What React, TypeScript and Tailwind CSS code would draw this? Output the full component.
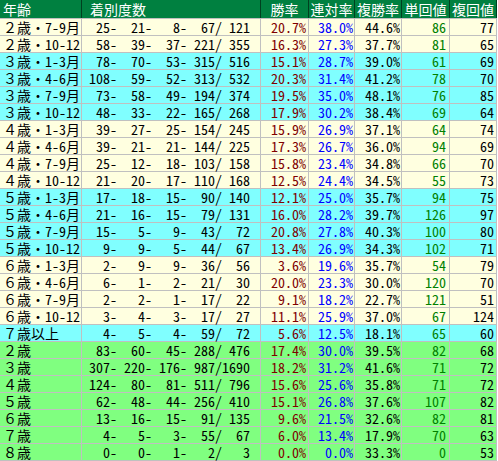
import React from 'react';

type Row = {
  label: string;
  counts: [number, number, number, number, number];
  win: string;
  quinella: string;
  place: string;
  winRet: number;
  placeRet: number;
  tone: 'cream' | 'cyan' | 'green';
};

const rows: Row[] = [
  { label: '２歳・7-9月', counts: [25, 21, 8, 67, 121], win: '20.7', quinella: '38.0', place: '44.6', winRet: 86, placeRet: 77, tone: 'cream' },
  { label: '２歳・10-12', counts: [58, 39, 37, 221, 355], win: '16.3', quinella: '27.3', place: '37.7', winRet: 81, placeRet: 65, tone: 'cream' },
  { label: '３歳・1-3月', counts: [78, 70, 53, 315, 516], win: '15.1', quinella: '28.7', place: '39.0', winRet: 61, placeRet: 69, tone: 'cyan' },
  { label: '３歳・4-6月', counts: [108, 59, 52, 313, 532], win: '20.3', quinella: '31.4', place: '41.2', winRet: 78, placeRet: 70, tone: 'cyan' },
  { label: '３歳・7-9月', counts: [73, 58, 49, 194, 374], win: '19.5', quinella: '35.0', place: '48.1', winRet: 76, placeRet: 85, tone: 'cyan' },
  { label: '３歳・10-12', counts: [48, 33, 22, 165, 268], win: '17.9', quinella: '30.2', place: '38.4', winRet: 69, placeRet: 64, tone: 'cyan' },
  { label: '４歳・1-3月', counts: [39, 27, 25, 154, 245], win: '15.9', quinella: '26.9', place: '37.1', winRet: 64, placeRet: 74, tone: 'cream' },
  { label: '４歳・4-6月', counts: [39, 21, 21, 144, 225], win: '17.3', quinella: '26.7', place: '36.0', winRet: 94, placeRet: 69, tone: 'cream' },
  { label: '４歳・7-9月', counts: [25, 12, 18, 103, 158], win: '15.8', quinella: '23.4', place: '34.8', winRet: 66, placeRet: 70, tone: 'cream' },
  { label: '４歳・10-12', counts: [21, 20, 17, 110, 168], win: '12.5', quinella: '24.4', place: '34.5', winRet: 55, placeRet: 73, tone: 'cream' },
  { label: '５歳・1-3月', counts: [17, 18, 15, 90, 140], win: '12.1', quinella: '25.0', place: '35.7', winRet: 94, placeRet: 75, tone: 'cyan' },
  { label: '５歳・4-6月', counts: [21, 16, 15, 79, 131], win: '16.0', quinella: '28.2', place: '39.7', winRet: 126, placeRet: 97, tone: 'cyan' },
  { label: '５歳・7-9月', counts: [15, 5, 9, 43, 72], win: '20.8', quinella: '27.8', place: '40.3', winRet: 100, placeRet: 80, tone: 'cyan' },
  { label: '５歳・10-12', counts: [9, 9, 5, 44, 67], win: '13.4', quinella: '26.9', place: '34.3', winRet: 102, placeRet: 71, tone: 'cyan' },
  { label: '６歳・1-3月', counts: [2, 9, 9, 36, 56], win: '3.6', quinella: '19.6', place: '35.7', winRet: 54, placeRet: 79, tone: 'cream' },
  { label: '６歳・4-6月', counts: [6, 1, 2, 21, 30], win: '20.0', quinella: '23.3', place: '30.0', winRet: 120, placeRet: 70, tone: 'cream' },
  { label: '６歳・7-9月', counts: [2, 2, 1, 17, 22], win: '9.1', quinella: '18.2', place: '22.7', winRet: 121, placeRet: 51, tone: 'cream' },
  { label: '６歳・10-12', counts: [3, 4, 3, 17, 27], win: '11.1', quinella: '25.9', place: '37.0', winRet: 67, placeRet: 124, tone: 'cream' },
  { label: '７歳以上', counts: [4, 5, 4, 59, 72], win: '5.6', quinella: '12.5', place: '18.1', winRet: 65, placeRet: 60, tone: 'cyan' },
  { label: '２歳', counts: [83, 60, 45, 288, 476], win: '17.4', quinella: '30.0', place: '39.5', winRet: 82, placeRet: 68, tone: 'green' },
  { label: '３歳', counts: [307, 220, 176, 987, 1690], win: '18.2', quinella: '31.2', place: '41.6', winRet: 71, placeRet: 72, tone: 'green' },
  { label: '４歳', counts: [124, 80, 81, 511, 796], win: '15.6', quinella: '25.6', place: '35.8', winRet: 71, placeRet: 72, tone: 'green' },
  { label: '５歳', counts: [62, 48, 44, 256, 410], win: '15.1', quinella: '26.8', place: '37.6', winRet: 107, placeRet: 82, tone: 'green' },
  { label: '６歳', counts: [13, 16, 15, 91, 135], win: '9.6', quinella: '21.5', place: '32.6', winRet: 82, placeRet: 81, tone: 'green' },
  { label: '７歳', counts: [4, 5, 3, 55, 67], win: '6.0', quinella: '13.4', place: '17.9', winRet: 70, placeRet: 63, tone: 'green' },
  { label: '８歳', counts: [0, 0, 1, 2, 3], win: '0.0', quinella: '0.0', place: '33.3', winRet: 0, placeRet: 53, tone: 'green' },
];

const toneBg = {
  cream: 'bg-[#ffffe0]',
  cyan: 'bg-[#80ffff]',
  green: 'bg-[#80ff80]',
};

const cols = 'grid grid-cols-[81px_178px_47px_45px_46px_47px_46px] gap-x-px';
const font = "font-['Noto_Sans_Mono_CJK_JP','Noto_Sans_CJK_JP',monospace]";

const pad = (n: number, w: number) => String(n).padStart(w, ' ');
const formatCounts = (c: Row['counts']) =>
  `${pad(c[0], 3)}- ${pad(c[1], 3)}- ${pad(c[2], 3)}- ${pad(c[3], 3)}/${pad(c[4], 4)}`;

export default function App() {
  return (
    <div className={`w-[498px] h-[461px] overflow-hidden bg-white text-[14px] leading-none ${font}`}>
      <div className="w-[497px] flex flex-col gap-y-px bg-[#c0c0c0] pb-px">
        {/* header */}
        <div className={`${cols} h-[18px] bg-[#00401f] text-white`}>
          <div className="bg-[#008040] flex items-center pl-[3px]">年齢</div>
          <div className="bg-[#008040] flex items-center pl-2">着別度数</div>
          <div className="bg-[#008040] flex items-center justify-center">勝率</div>
          <div className="bg-[#008040] flex items-center justify-center">連対率</div>
          <div className="bg-[#008040] flex items-center justify-center">複勝率</div>
          <div className="bg-[#008040] flex items-center justify-center">単回値</div>
          <div className="bg-[#008040] flex items-center justify-center">複回値</div>
        </div>

        {rows.map(r => {
          const bg = toneBg[r.tone];
          return (
            <div key={r.label} className={`${cols} h-[16px]`}>
              <div className={`${bg} flex items-center pl-[3px] text-black whitespace-nowrap`}>{r.label}</div>
              <div className={`${bg} flex items-center justify-end pr-[10px] text-black whitespace-pre`}>
                {formatCounts(r.counts)}
              </div>
              <div className={`${bg} flex items-center justify-end pr-[2px] text-[#800000]`}>{r.win}%</div>
              <div className={`${bg} flex items-center justify-end pr-[1px] text-[#0000ff]`}>{r.quinella}%</div>
              <div className={`${bg} flex items-center justify-end pr-[1px] text-black`}>{r.place}%</div>
              <div className={`${bg} flex items-center justify-end pr-[3px] text-[#008000]`}>{r.winRet}</div>
              <div className={`${bg} flex items-center justify-end pr-[2px] text-black`}>{r.placeRet}</div>
            </div>
          );
        })}
      </div>
    </div>
  );
}
